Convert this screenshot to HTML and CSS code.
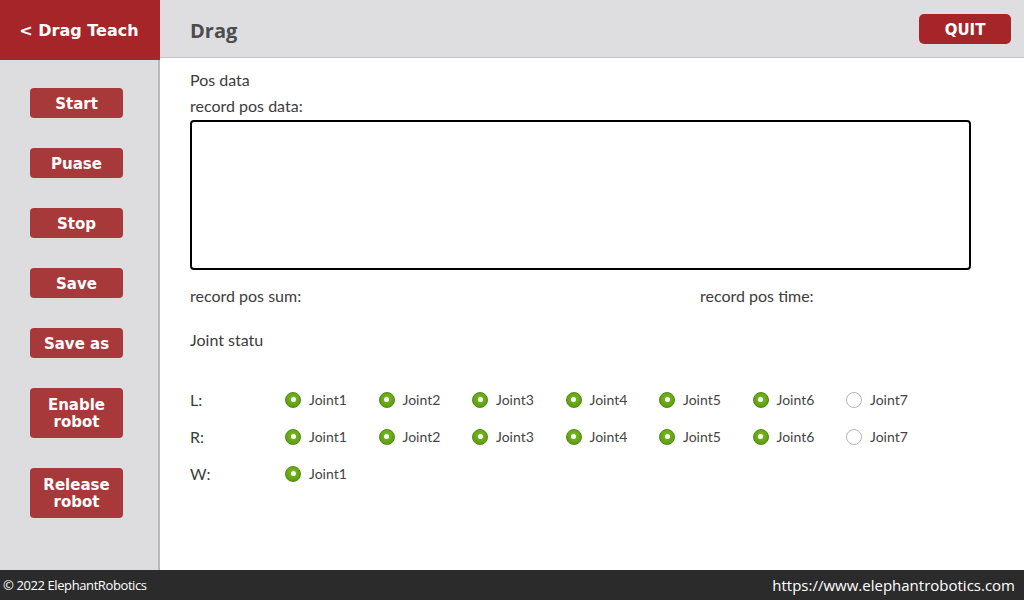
FILE: index.html
```html
<!DOCTYPE html>
<html lang="en">
<head>
  <meta charset="UTF-8">
  <title>Drag Teach</title>
  <link rel="stylesheet" href="styles.css">
</head>
<body>
  <div class="app">
    <aside class="sidebar">
      <div class="back">&lt; Drag Teach</div>
      <div class="actions">
        <button class="btn">Start</button>
        <button class="btn">Puase</button>
        <button class="btn">Stop</button>
        <button class="btn">Save</button>
        <button class="btn">Save as</button>
        <button class="btn tall">Enable<br>robot</button>
        <button class="btn tall">Release<br>robot</button>
      </div>
    </aside>
    <main class="main">
      <header class="topbar">
        <h1 class="title">Drag</h1>
        <button class="quit">QUIT</button>
      </header>
      <section class="content">
        <div class="line">Pos data</div>
        <div class="line">record pos data:</div>
        <textarea class="record"></textarea>
        <div class="line stats">
          <span class="sum">record pos sum:</span>
          <span>record pos time:</span>
        </div>
        <div class="line joint-title">Joint statu</div>
        <div class="joints">
          <div class="joint-row">
            <span class="side">L:</span>
            <label class="joint"><span class="radio on"></span>Joint1</label>
            <label class="joint"><span class="radio on"></span>Joint2</label>
            <label class="joint"><span class="radio on"></span>Joint3</label>
            <label class="joint"><span class="radio on"></span>Joint4</label>
            <label class="joint"><span class="radio on"></span>Joint5</label>
            <label class="joint"><span class="radio on"></span>Joint6</label>
            <label class="joint"><span class="radio"></span>Joint7</label>
          </div>
          <div class="joint-row">
            <span class="side">R:</span>
            <label class="joint"><span class="radio on"></span>Joint1</label>
            <label class="joint"><span class="radio on"></span>Joint2</label>
            <label class="joint"><span class="radio on"></span>Joint3</label>
            <label class="joint"><span class="radio on"></span>Joint4</label>
            <label class="joint"><span class="radio on"></span>Joint5</label>
            <label class="joint"><span class="radio on"></span>Joint6</label>
            <label class="joint"><span class="radio"></span>Joint7</label>
          </div>
          <div class="joint-row">
            <span class="side">W:</span>
            <label class="joint"><span class="radio on"></span>Joint1</label>
          </div>
        </div>
      </section>
    </main>
  </div>
  <footer class="footer">
    <span class="copy">© 2022 ElephantRobotics</span>
    <span class="url">https://www.elephantrobotics.com</span>
  </footer>
</body>
</html>
```
FILE: styles.css
```css
body {
  margin: 0;
  width: 1024px;
  height: 600px;
  overflow: hidden;
  display: flex;
  flex-direction: column;
  background: #ffffff;
  font-family: Lato, "Open Sans", sans-serif;
}

.app {
  flex: 1;
  display: flex;
  min-height: 0;
}

/* Sidebar */
.sidebar {
  width: 158px;
  background: #dddddf;
  border-right: 2px solid #b9b9b9;
  display: flex;
  flex-direction: column;
}

.back {
  height: 60px;
  margin-right: -2px;
  background: #a52528;
  color: #ffffff;
  font-family: "DejaVu Sans", sans-serif;
  font-weight: bold;
  font-size: 16px;
  display: flex;
  align-items: center;
  justify-content: center;
  padding: 1px 2px 0 0;
  box-sizing: border-box;
}

.actions {
  display: flex;
  flex-direction: column;
  align-items: flex-start;
  gap: 30px;
  padding: 28px 0 0 30px;
}

.btn {
  width: 93px;
  height: 30px;
  padding: 2px 0 0;
  border: none;
  border-radius: 4px;
  background: #a8393b;
  color: #ffffff;
  font-family: "DejaVu Sans", sans-serif;
  font-weight: bold;
  font-size: 15px;
  line-height: 17px;
}

.btn.tall {
  height: 50px;
}

/* Main */
.main {
  flex: 1;
  display: flex;
  flex-direction: column;
}

.topbar {
  height: 57px;
  background: #dedee0;
  border-bottom: 1px solid #c4c4c4;
  display: flex;
  align-items: center;
  justify-content: space-between;
  padding: 0 13px 0 30px;
}

.title {
  margin: 3px 0 0;
  font-family: "Open Sans", sans-serif;
  font-size: 20px;
  font-weight: bold;
  color: #4c4c4c;
}

.quit {
  width: 92px;
  height: 30px;
  margin-top: 1px;
  padding-top: 2px;
  border: none;
  border-radius: 5px;
  background: #a52528;
  color: #ffffff;
  font-family: "DejaVu Sans", sans-serif;
  font-weight: bold;
  font-size: 15px;
}

.content {
  padding: 9px 53px 0 30px;
  color: #3c3c3c;
  font-size: 16px;
}

.line {
  height: 26px;
  line-height: 26px;
}

.record {
  display: block;
  box-sizing: border-box;
  width: 781px;
  height: 150px;
  margin: 1px 0 13px;
  border: 2px solid #000000;
  border-radius: 4px;
  resize: none;
}

.stats {
  display: flex;
}

.sum {
  width: 510px;
}

.joint-title {
  margin-top: 18px;
}

.joints {
  margin-top: 28px;
}

.joint-row {
  height: 37px;
  display: flex;
  align-items: center;
}

.side {
  width: 95px;
}

.joint {
  width: 93.5px;
  display: flex;
  align-items: center;
  gap: 8px;
  font-size: 14px;
  color: #444444;
}

.radio {
  box-sizing: border-box;
  flex: none;
  width: 16px;
  height: 16px;
  border-radius: 50%;
  border: 1px solid #b5b5b5;
  background: #ffffff;
  position: relative;
}

.radio.on {
  border: 1px solid #4f8a0c;
  background: radial-gradient(circle at 50% 40%, #7cbc22, #54930c);
}

.radio.on::after {
  content: "";
  position: absolute;
  left: 4.5px;
  top: 4.5px;
  width: 5px;
  height: 5px;
  border-radius: 50%;
  background: #ffffff;
}

/* Footer */
.footer {
  height: 30px;
  background: #2b2b2b;
  color: #ffffff;
  display: flex;
  align-items: center;
  justify-content: space-between;
  padding: 0 9px 0 3px;
  font-family: "Open Sans", sans-serif;
}

.copy {
  font-size: 13px;
  letter-spacing: -0.4px;
}

.url {
  font-size: 15px;
}
```
